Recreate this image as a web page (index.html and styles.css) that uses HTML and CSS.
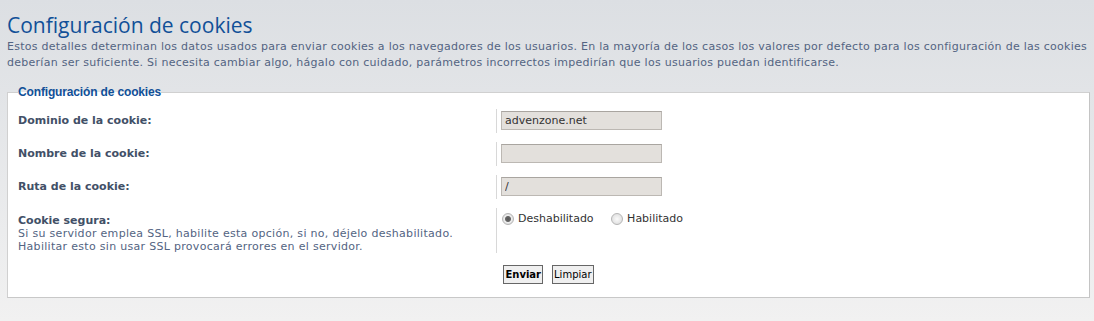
FILE: index.html
```html
<!DOCTYPE html>
<html lang="es">

<head>
    <meta charset="UTF-8">
    <title>Configuración de cookies</title>
    <link rel="stylesheet" href="styles.css">
</head>

<body>
    <div class="main">
        <h1>Configuración de cookies</h1>
        <p class="intro">Estos detalles determinan los datos usados para enviar cookies a los navegadores de los usuarios. En la mayoría de los casos los valores por defecto para los configuración de las cookies deberían ser suficiente. Si necesita cambiar algo, hágalo con cuidado, parámetros incorrectos impedirían que los usuarios puedan identificarse.</p>

        <form>
            <fieldset>
                <legend>Configuración de cookies</legend>
                <dl>
                    <dt><label>Dominio de la cookie:</label></dt>
                    <dd><input type="text" value="advenzone.net"></dd>
                </dl>
                <dl>
                    <dt><label>Nombre de la cookie:</label></dt>
                    <dd><input type="text" value=""></dd>
                </dl>
                <dl>
                    <dt><label>Ruta de la cookie:</label></dt>
                    <dd><input type="text" value="/"></dd>
                </dl>
                <dl class="tall">
                    <dt>
                        <label>Cookie segura:</label>
                        <span class="explain">Si su servidor emplea SSL, habilite esta opción, si no, déjelo deshabilitado. Habilitar esto sin usar SSL provocará errores en el servidor.</span>
                    </dt>
                    <dd>
                        <label class="opt"><input type="radio" name="secure" checked> Deshabilitado</label>
                        <label class="opt"><input type="radio" name="secure"> Habilitado</label>
                    </dd>
                </dl>
                <p class="submit">
                    <button type="submit" class="bold">Enviar</button>
                    <button type="reset">Limpiar</button>
                </p>
            </fieldset>
        </form>
    </div>
</body>

</html>
```

FILE: styles.css
```css
* {
    margin: 0;
    padding: 0;
    box-sizing: border-box;
}

body {
    background: linear-gradient(#dcdfe3, #f1f1f1);
    min-height: 321px;
    font-family: "DejaVu Sans", Verdana, sans-serif;
    font-size: 11px;
    color: #536482;
}

.main {
    padding: 11px 4px 0 7px;
}

h1 {
    font-family: "Open Sans", sans-serif;
    font-weight: normal;
    font-size: 21px;
    line-height: 28px;
    color: #115098;
}

.intro {
    line-height: 16px;
    width: 1087px;
    letter-spacing: 0.27px;
}

fieldset {
    margin-top: 14px;
    background-color: #fff;
    border: 1px solid #d0d0d0;
    border-right-color: #c4c4c4;
    border-bottom-color: #c8c8c8;
    padding: 10px 10px 13px 10px;
}

legend {
    font-family: "Liberation Sans", Arial, sans-serif;
    font-weight: bold;
    font-size: 12px;
    letter-spacing: -0.15px;
    color: #115098;
}

dl {
    display: grid;
    grid-template-columns: 478px 1fr;
    margin-bottom: 9px;
    min-height: 24px;
}

dt {
    padding-top: 5px;
    color: #425067;
    line-height: 13px;
}

dt label {
    font-weight: bold;
    display: block;
}

.explain {
    display: block;
    font-weight: normal;
    color: #536482;
    letter-spacing: 0.3px;
}

dd {
    border-left: 1px solid #d8d8d8;
    padding: 2px 0 2px 4px;
}

dd input[type="text"] {
    width: 161px;
    height: 19px;
    background-color: #e3e0dc;
    border: 1px solid #bcb8b3;
    border-top-color: #a9a5a0;
    font-family: "DejaVu Sans", Verdana, sans-serif;
    font-size: 11px;
    color: #333;
    padding: 0 3px;
}

.tall {
    min-height: 45px;
    margin-bottom: 12px;
}

.tall dt {
    padding-top: 6px;
}

.tall dd {
    padding-top: 3px;
}

.opt {
    display: inline-flex;
    align-items: center;
    gap: 4px;
    margin-right: 13px;
    line-height: 16px;
    color: #333;
}

.opt input {
    appearance: none;
    width: 12px;
    height: 12px;
    border-radius: 50%;
    border: 1px solid #b5b5b5;
    background: radial-gradient(#fafafa, #d8d8d8);
    margin-left: 1px;
}

.opt input:checked {
    background: radial-gradient(circle, #555 0, #666 2.5px, #eee 3.5px, #d6d6d6 6px);
}

.submit {
    display: flex;
    justify-content: center;
    gap: 9px;
}

.submit button {
    font-family: "DejaVu Sans", Verdana, sans-serif;
    font-size: 10px;
    height: 19px;
    padding: 0 1px;
    background-color: #efefef;
    border: 1px solid #666;
    color: #000;
}

.submit button.bold {
    font-weight: bold;
}
```
